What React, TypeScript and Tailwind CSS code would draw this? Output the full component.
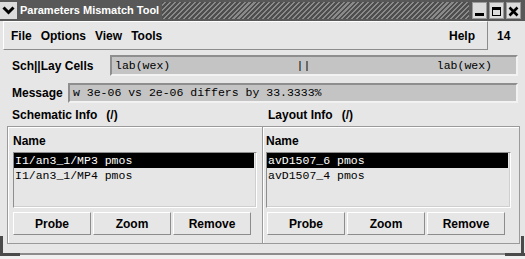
import React from "react";

const raised = "border border-t-white border-l-white border-b-[#8c8c8c] border-r-[#8c8c8c]";
const sunken = "border-2 border-t-[#8e8e8e] border-l-[#8e8e8e] border-b-[#f2f2f2] border-r-[#f2f2f2]";
const mono = "font-['Liberation_Mono','Courier_New',monospace] text-[11.5px]";

const TitleButton = ({ children }: { children: React.ReactNode }) => (
  <div className="w-[15px] h-[17px] bg-[#dcdcdc] border border-[#9a9a9a] flex items-center justify-center">
    {children}
  </div>
);

const TitleBar = () => (
  <div className="h-[21px] flex items-center bg-[#585858] pr-[4px]">
    <div className="w-[17px] h-[17px] bg-[#dcdcdc] flex items-center justify-center">
      <svg width="13" height="9" viewBox="0 0 13 9">
        <polyline points="1.5,1.5 6.5,6.5 11.5,1.5" fill="none" stroke="#000" strokeWidth="3" />
      </svg>
    </div>
    <span className="pl-[3px] text-white text-[11px] font-bold leading-[21px] whitespace-nowrap">
      Parameters Mismatch Tool
    </span>
    <div className="flex-1 h-[17px] ml-[3px] mr-[3px] bg-[repeating-linear-gradient(135deg,#4e4e4e_0px,#4e4e4e_2px,#8a8a8a_2px,#8a8a8a_3.5px)]" />
    <div className="flex gap-[2px]">
      <TitleButton>
        <svg width="11" height="13" viewBox="0 0 11 13">
          <rect x="1" y="9" width="9" height="3" fill="#000" />
        </svg>
      </TitleButton>
      <TitleButton>
        <svg width="11" height="13" viewBox="0 0 11 13">
          <rect x="1.5" y="3.5" width="8" height="8" fill="none" stroke="#000" strokeWidth="1" />
          <rect x="1" y="3" width="9" height="3" fill="#000" />
        </svg>
      </TitleButton>
      <TitleButton>
        <svg width="11" height="13" viewBox="0 0 11 13">
          <path d="M1.5 3.5 L9.5 11.5 M9.5 3.5 L1.5 11.5" stroke="#000" strokeWidth="2.6" />
        </svg>
      </TitleButton>
    </div>
  </div>
);

const MenuBar = () => (
  <div className="h-[29px] flex items-stretch">
    <div className={`w-[485px] ml-[3px] flex items-center pl-[7px] pr-[12px] gap-[9px] ${raised}`}>
      <span>File</span>
      <span>Options</span>
      <span>View</span>
      <span>Tools</span>
      <span className="ml-auto">Help</span>
    </div>
    <div className="flex items-center pl-[9px]">14</div>
  </div>
);

const ListPanel = ({ items, listWidth, btnOffset }: { items: string[]; listWidth: string; btnOffset: string }) => (
  <div className="flex flex-col pt-[6px]">
    <div className="h-[16px] leading-[16px]">Name</div>
    <div className={`mt-[3px] h-[56px] ${listWidth} border border-t-[#8e8e8e] border-l-[#8e8e8e] border-b-white border-r-white shadow-[inset_-1px_-1px_0_#cfcfcf]`}>
      {items.map((it, i) => (
        <div
          key={it}
          className={`h-[15px] leading-[15px] mr-[2px] pl-[1px] whitespace-pre font-normal ${mono} ${
            i === 0 ? "bg-black text-white" : "text-black"
          }`}
        >
          {it}
        </div>
      ))}
    </div>
    <div className={`mt-[4px] flex gap-[2px] ${btnOffset}`}>
      {["Probe", "Zoom", "Remove"].map((b) => (
        <div key={b} className={`w-[78px] h-[23px] flex items-center justify-center ${raised}`}>
          {b}
        </div>
      ))}
    </div>
  </div>
);

export default function App() {
  return (
    <div className="w-[525px] h-[259px] bg-[#e6e6e6] flex flex-col overflow-hidden relative font-['Liberation_Sans',Arial,sans-serif] text-[12px] font-bold text-black">
      <TitleBar />
      <MenuBar />

      <div className="mt-[5px] h-[21px] flex items-center">
        <div className="w-[110px] pl-[12px]">Sch||Lay Cells</div>
        <div className={`w-[408px] h-full bg-[#c4c4c4] flex items-center pl-[3px] pr-[24px] font-normal ${mono} ${sunken}`}>
          <span>lab(wex)</span>
          <span className="flex-1" />
          <span>||</span>
          <span className="flex-1" />
          <span>lab(wex)</span>
        </div>
      </div>

      <div className="mt-[7px] h-[20px] flex items-center">
        <div className="w-[68px] pl-[12px]">Message</div>
        <div className={`w-[450px] h-full bg-[#c4c4c4] flex items-center pl-[3px] font-normal whitespace-pre ${mono} ${sunken}`}>
          w 3e-06 vs 2e-06 differs by 33.3333%
        </div>
      </div>

      <div className="h-[23px] flex items-center">
        <div className="w-[267px] pl-[12px]">
          Schematic Info<span className="ml-[9px]">(/)</span>
        </div>
        <div className="pl-[1px]">
          Layout Info<span className="ml-[9px]">(/)</span>
        </div>
      </div>

      <div className="ml-[7px] w-[513px] h-[118px] flex border border-[#9a9a9a] shadow-[inset_1px_1px_0_#fff]">
        <div className="w-[255px] border-r border-[#9a9a9a] pl-[5px]">
          <ListPanel items={["I1/an3_1/MP3 pmos", "I1/an3_1/MP4 pmos"]} listWidth="w-[244px]" btnOffset="" />
        </div>
        <div className="flex-1 pl-[3px] shadow-[inset_1px_0_0_#fff]">
          <ListPanel items={["avD1507_6 pmos", "avD1507_4 pmos"]} listWidth="w-[245px]" btnOffset="ml-[1px]" />
        </div>
      </div>

      <div className="mt-auto h-[6px] border-t-2 border-[#8c8c8c] bg-[#f0f0f0]" />
      <div className="absolute left-0 bottom-[3px] w-[20px] h-[3px] bg-[#4a4a4a]" />
      <div className="absolute left-0 bottom-[3px] w-[3px] h-[20px] bg-[#4a4a4a]" />
      <div className="absolute right-0 bottom-[3px] w-[20px] h-[3px] bg-[#4a4a4a]" />
      <div className="absolute right-[1px] bottom-[3px] w-[3px] h-[20px] bg-[#4a4a4a]" />
    </div>
  );
}
